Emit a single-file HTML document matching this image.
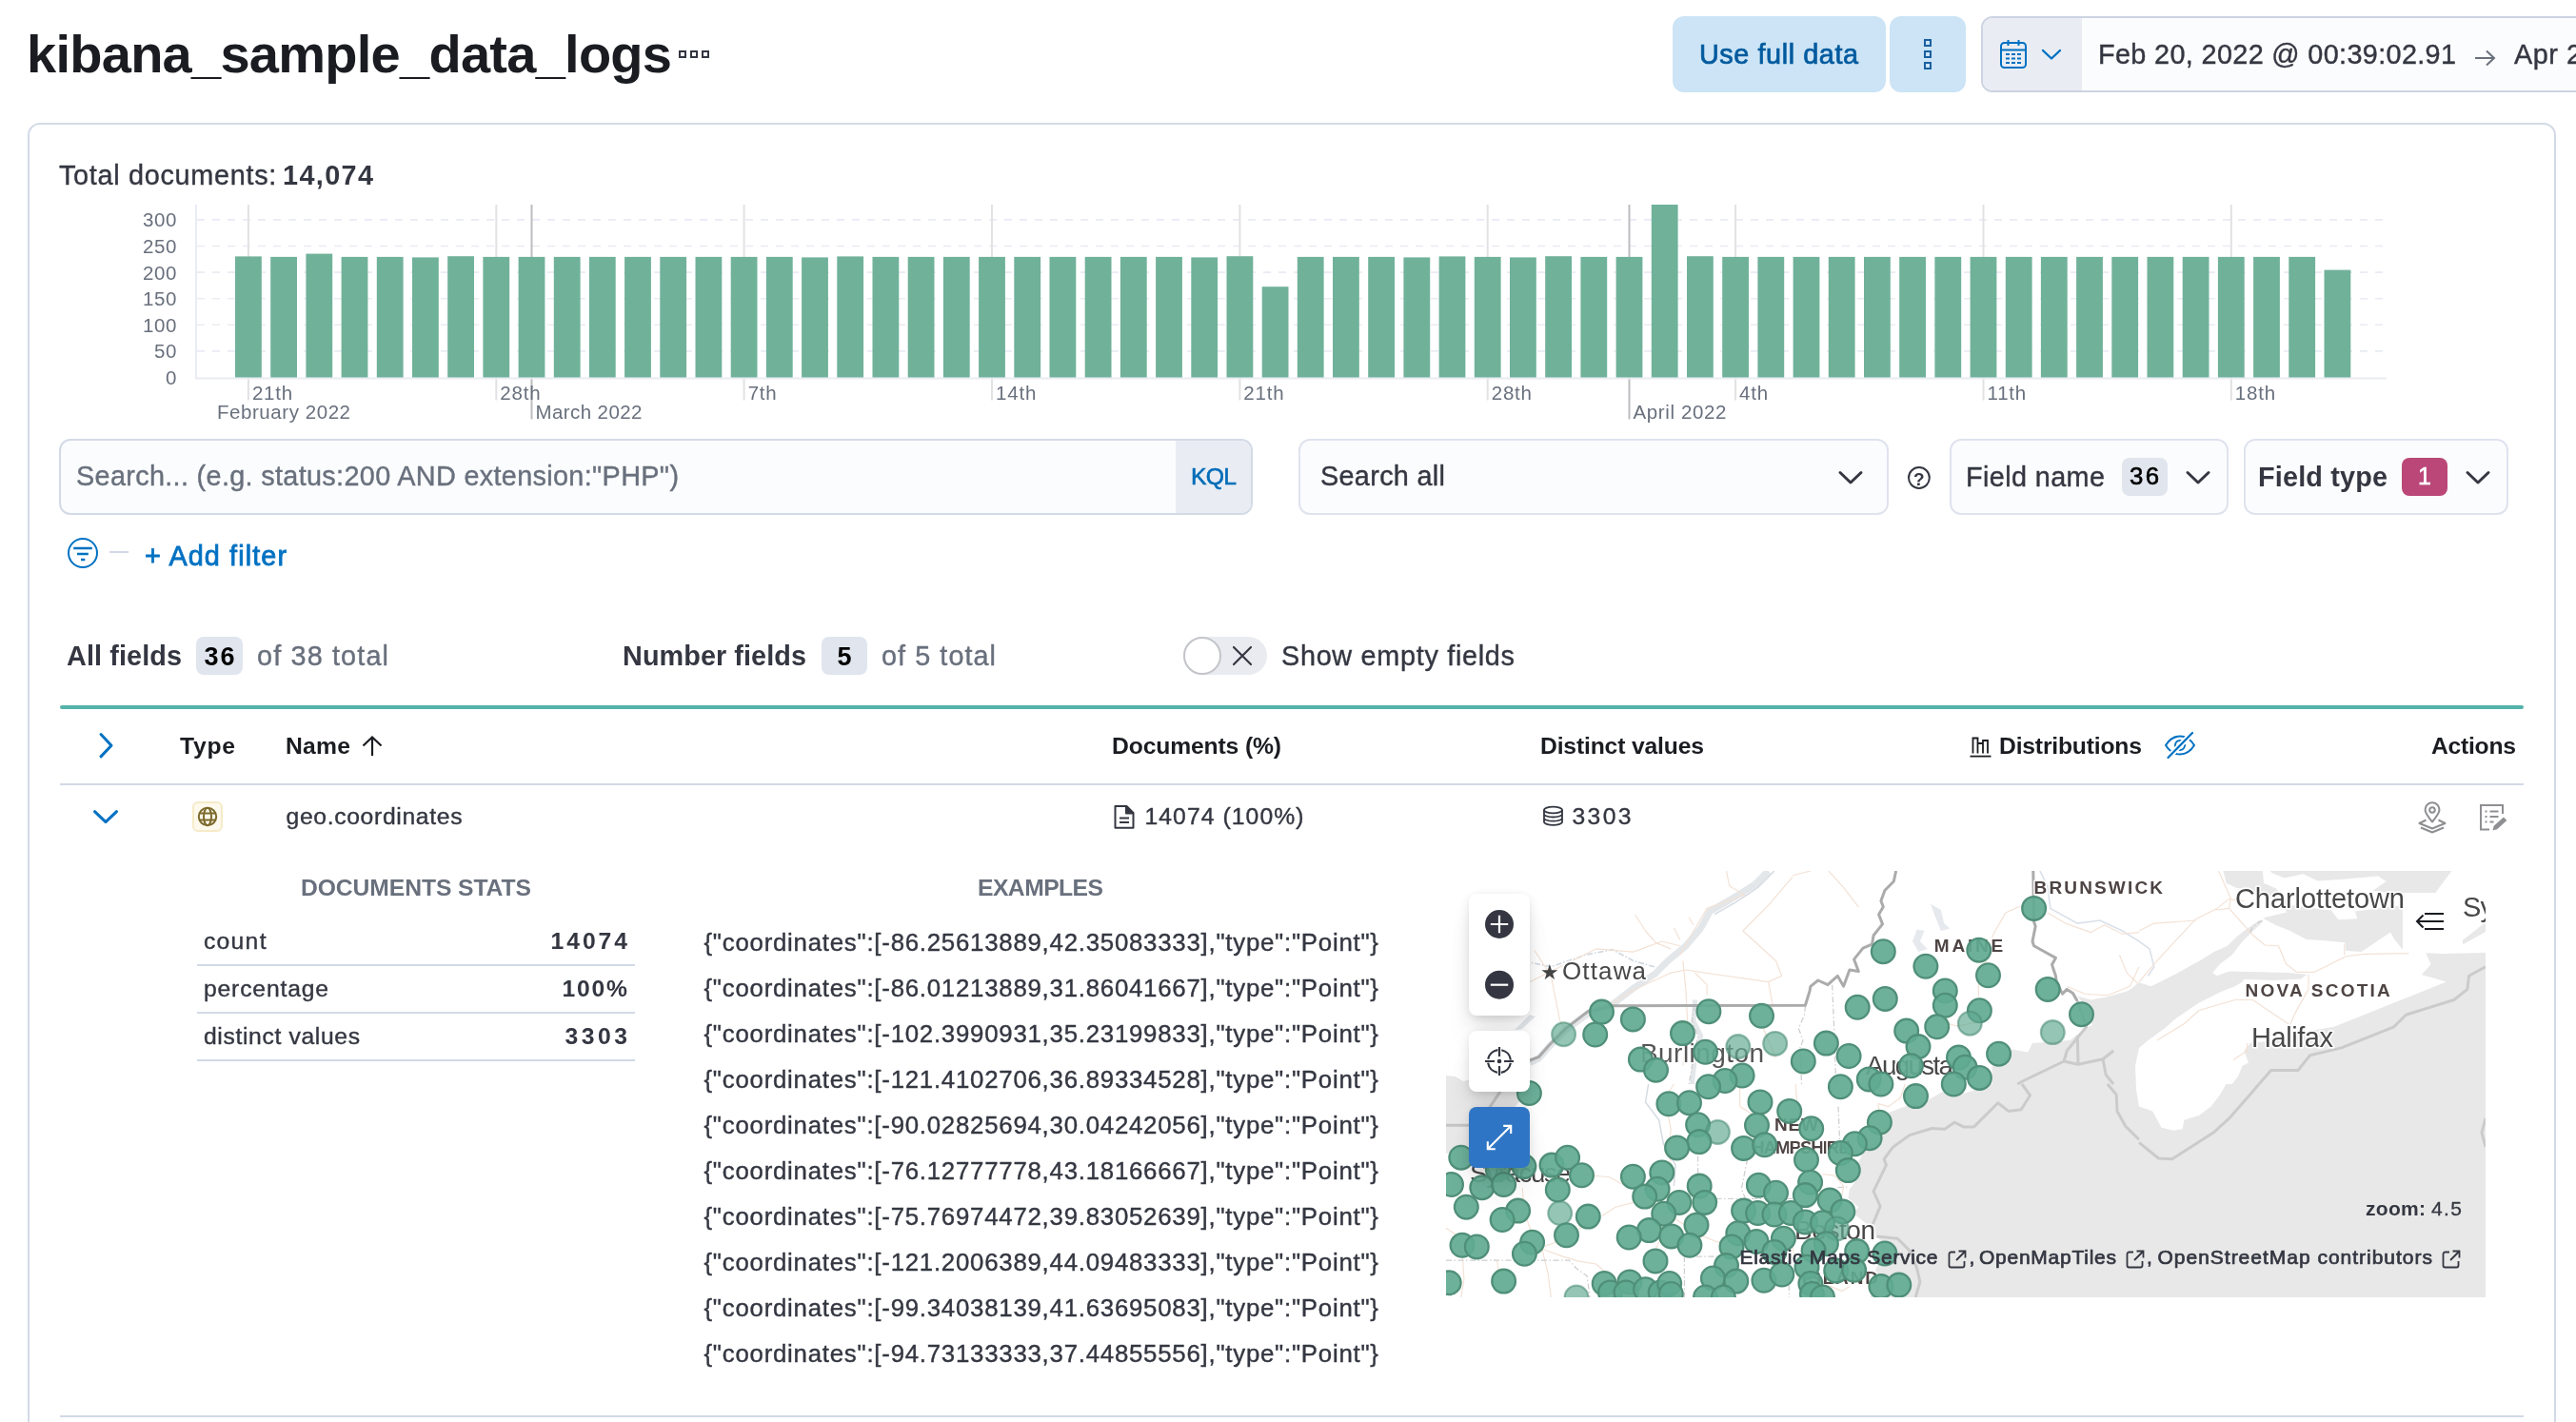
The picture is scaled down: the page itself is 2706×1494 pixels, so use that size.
<!DOCTYPE html><html><head><meta charset="utf-8"><title>Data Visualizer</title><style>
html,body{margin:0;padding:0;background:#fff;}body{width:2706px;height:1494px;position:relative;overflow:hidden;font-family:"Liberation Sans", sans-serif;}
.a{position:absolute;box-sizing:border-box;display:block}.t{position:absolute;white-space:pre;margin:0;padding:0}
</style></head><body><div id="root" style="position:absolute;left:0;top:0;width:2706px;height:1494px;overflow:hidden;will-change:transform;background:#fff">
<div class="a" style="left:713px;top:53px;width:8px;height:8px;background:transparent;border:2px solid #343741;"></div>
<div class="a" style="left:725px;top:53px;width:8px;height:8px;background:transparent;border:2px solid #343741;"></div>
<div class="a" style="left:737px;top:53px;width:8px;height:8px;background:transparent;border:2px solid #343741;"></div>
<div class="a" style="left:1757px;top:17px;width:224px;height:80px;background:#cce4f5;border-radius:12px;"></div>
<div class="a" style="left:1985px;top:17px;width:80px;height:80px;background:#cce4f5;border-radius:12px;"></div>
<div class="a" style="left:2021px;top:41px;width:8px;height:8px;background:transparent;border:2px solid #1a5fa0;"></div>
<div class="a" style="left:2021px;top:53px;width:8px;height:8px;background:transparent;border:2px solid #1a5fa0;"></div>
<div class="a" style="left:2021px;top:65px;width:8px;height:8px;background:transparent;border:2px solid #1a5fa0;"></div>
<div class="a" style="left:2081px;top:17px;width:700px;height:80px;background:#fbfcfd;border:2px solid #cdd3e2;border-radius:12px;"></div>
<div class="a" style="left:2083px;top:19px;width:104px;height:76px;background:#e9edf3;border-radius:10px 0 0 10px;"></div>
<svg class="a" style="left:2099px;top:40px;" width="32" height="34" viewBox="0 0 32 34"><g fill="none" stroke="#0071c2" stroke-width="2">
<rect x="3" y="5" width="26" height="26" rx="3.5"/>
<path d="M3 12.5h26M10.5 2v6M21.5 2v6"/>
<path d="M8 17h4M14 17h4M20 17h4M8 21.5h4M14 21.5h4M20 21.5h4M8 26h4M14 26h4M20 26h4" stroke-width="2.2"/></g></svg>
<svg class="a" style="left:2143px;top:49px;" width="24" height="16" viewBox="0 0 24 16"><path d="M3 4l9 8.5 9-8.5" fill="none" stroke="#0071c2" stroke-width="2.4" stroke-linecap="round" stroke-linejoin="round"/></svg>
<svg class="a" style="left:2598px;top:50px;" width="26" height="22" viewBox="0 0 26 22"><path d="M2 11h20M14 3.5l8 7.5-8 7.5" fill="none" stroke="#69707d" stroke-width="2"/></svg>
<div class="a" style="left:29px;top:129px;width:2656px;height:1500px;background:#fff;border:2px solid #d3dae6;border-radius:13px;"></div>
<svg class="a" style="left:60px;top:205px;" width="2600" height="245" viewBox="60 205 2600 245"><path d="M207 368.9H2503" stroke="#e9ecf3" stroke-width="1.6" stroke-dasharray="8 8"/><path d="M207 341.3H2503" stroke="#e9ecf3" stroke-width="1.6" stroke-dasharray="8 8"/><path d="M207 313.7H2503" stroke="#e9ecf3" stroke-width="1.6" stroke-dasharray="8 8"/><path d="M207 286.1H2503" stroke="#e9ecf3" stroke-width="1.6" stroke-dasharray="8 8"/><path d="M207 258.5H2503" stroke="#e9ecf3" stroke-width="1.6" stroke-dasharray="8 8"/><path d="M207 230.9H2503" stroke="#e9ecf3" stroke-width="1.6" stroke-dasharray="8 8"/><path d="M260.9 215V420.5" stroke="#e2e2e4" stroke-width="2"/><path d="M521.3 215V420.5" stroke="#e2e2e4" stroke-width="2"/><path d="M781.6 215V420.5" stroke="#e2e2e4" stroke-width="2"/><path d="M1042.0 215V420.5" stroke="#e2e2e4" stroke-width="2"/><path d="M1302.4 215V420.5" stroke="#e2e2e4" stroke-width="2"/><path d="M1562.7 215V420.5" stroke="#e2e2e4" stroke-width="2"/><path d="M1823.1 215V420.5" stroke="#e2e2e4" stroke-width="2"/><path d="M2083.5 215V420.5" stroke="#e2e2e4" stroke-width="2"/><path d="M2343.8 215V420.5" stroke="#e2e2e4" stroke-width="2"/><path d="M558.5 215V440.5" stroke="#bdbdc0" stroke-width="2"/><path d="M1711.5 215V440.5" stroke="#bdbdc0" stroke-width="2"/><path d="M206 215V397.5H2507" fill="none" stroke="#e9ecf3" stroke-width="2"/><rect x="247.0" y="269.4" width="27.8" height="127.1" fill="#70b19a"/><rect x="284.2" y="269.9" width="27.8" height="126.6" fill="#70b19a"/><rect x="321.4" y="266.6" width="27.8" height="129.9" fill="#70b19a"/><rect x="358.6" y="269.9" width="27.8" height="126.6" fill="#70b19a"/><rect x="395.8" y="269.9" width="27.8" height="126.6" fill="#70b19a"/><rect x="433.0" y="270.4" width="27.8" height="126.1" fill="#70b19a"/><rect x="470.2" y="269.2" width="27.8" height="127.3" fill="#70b19a"/><rect x="507.4" y="269.9" width="27.8" height="126.6" fill="#70b19a"/><rect x="544.6" y="269.9" width="27.8" height="126.6" fill="#70b19a"/><rect x="581.8" y="269.9" width="27.8" height="126.6" fill="#70b19a"/><rect x="618.9" y="269.9" width="27.8" height="126.6" fill="#70b19a"/><rect x="656.1" y="269.9" width="27.8" height="126.6" fill="#70b19a"/><rect x="693.3" y="269.9" width="27.8" height="126.6" fill="#70b19a"/><rect x="730.5" y="269.9" width="27.8" height="126.6" fill="#70b19a"/><rect x="767.7" y="269.9" width="27.8" height="126.6" fill="#70b19a"/><rect x="804.9" y="269.9" width="27.8" height="126.6" fill="#70b19a"/><rect x="842.1" y="270.4" width="27.8" height="126.1" fill="#70b19a"/><rect x="879.3" y="269.4" width="27.8" height="127.1" fill="#70b19a"/><rect x="916.5" y="269.9" width="27.8" height="126.6" fill="#70b19a"/><rect x="953.7" y="269.9" width="27.8" height="126.6" fill="#70b19a"/><rect x="990.9" y="269.9" width="27.8" height="126.6" fill="#70b19a"/><rect x="1028.1" y="269.9" width="27.8" height="126.6" fill="#70b19a"/><rect x="1065.3" y="269.9" width="27.8" height="126.6" fill="#70b19a"/><rect x="1102.5" y="269.9" width="27.8" height="126.6" fill="#70b19a"/><rect x="1139.7" y="269.9" width="27.8" height="126.6" fill="#70b19a"/><rect x="1176.9" y="269.9" width="27.8" height="126.6" fill="#70b19a"/><rect x="1214.1" y="269.9" width="27.8" height="126.6" fill="#70b19a"/><rect x="1251.3" y="270.4" width="27.8" height="126.1" fill="#70b19a"/><rect x="1288.5" y="269.2" width="27.8" height="127.3" fill="#70b19a"/><rect x="1325.7" y="301.2" width="27.8" height="95.3" fill="#70b19a"/><rect x="1362.8" y="269.9" width="27.8" height="126.6" fill="#70b19a"/><rect x="1400.0" y="269.9" width="27.8" height="126.6" fill="#70b19a"/><rect x="1437.2" y="269.9" width="27.8" height="126.6" fill="#70b19a"/><rect x="1474.4" y="270.4" width="27.8" height="126.1" fill="#70b19a"/><rect x="1511.6" y="269.4" width="27.8" height="127.1" fill="#70b19a"/><rect x="1548.8" y="269.9" width="27.8" height="126.6" fill="#70b19a"/><rect x="1586.0" y="270.4" width="27.8" height="126.1" fill="#70b19a"/><rect x="1623.2" y="269.2" width="27.8" height="127.3" fill="#70b19a"/><rect x="1660.4" y="269.9" width="27.8" height="126.6" fill="#70b19a"/><rect x="1697.6" y="269.9" width="27.8" height="126.6" fill="#70b19a"/><rect x="1734.8" y="215.0" width="27.8" height="181.5" fill="#70b19a"/><rect x="1772.0" y="269.2" width="27.8" height="127.3" fill="#70b19a"/><rect x="1809.2" y="269.9" width="27.8" height="126.6" fill="#70b19a"/><rect x="1846.4" y="269.9" width="27.8" height="126.6" fill="#70b19a"/><rect x="1883.6" y="269.9" width="27.8" height="126.6" fill="#70b19a"/><rect x="1920.8" y="269.9" width="27.8" height="126.6" fill="#70b19a"/><rect x="1958.0" y="269.9" width="27.8" height="126.6" fill="#70b19a"/><rect x="1995.2" y="269.9" width="27.8" height="126.6" fill="#70b19a"/><rect x="2032.4" y="269.9" width="27.8" height="126.6" fill="#70b19a"/><rect x="2069.6" y="269.9" width="27.8" height="126.6" fill="#70b19a"/><rect x="2106.8" y="269.9" width="27.8" height="126.6" fill="#70b19a"/><rect x="2143.9" y="269.9" width="27.8" height="126.6" fill="#70b19a"/><rect x="2181.1" y="269.9" width="27.8" height="126.6" fill="#70b19a"/><rect x="2218.3" y="269.9" width="27.8" height="126.6" fill="#70b19a"/><rect x="2255.5" y="269.9" width="27.8" height="126.6" fill="#70b19a"/><rect x="2292.7" y="269.9" width="27.8" height="126.6" fill="#70b19a"/><rect x="2329.9" y="269.9" width="27.8" height="126.6" fill="#70b19a"/><rect x="2367.1" y="269.9" width="27.8" height="126.6" fill="#70b19a"/><rect x="2404.3" y="269.9" width="27.8" height="126.6" fill="#70b19a"/><rect x="2441.5" y="283.6" width="27.8" height="112.9" fill="#70b19a"/></svg>
<div class="a" style="left:62px;top:461px;width:1254px;height:80px;background:#fbfcfd;border:2px solid #d3dae6;border-radius:12px;"></div>
<div class="a" style="left:1235px;top:463px;width:79px;height:76px;background:#e9edf3;border-radius:0 10px 10px 0;"></div>
<div class="a" style="left:1364px;top:461px;width:620px;height:80px;background:#fbfcfd;border:2px solid #dfe3ee;border-radius:12px;"></div>
<svg class="a" style="left:1929px;top:492px;" width="30" height="19" viewBox="0 0 30 19"><path d="M4 4.5l11.0 10.5 11.0 -10.5" fill="none" stroke="#343741" stroke-width="3" stroke-linecap="round" stroke-linejoin="round"/></svg>
<svg class="a" style="left:2002px;top:488px;" width="28" height="28" viewBox="0 0 28 28"><circle cx="13.9" cy="14" r="10.9" fill="none" stroke="#343741" stroke-width="2"/></svg>
<div class="a" style="left:2048px;top:461px;width:293px;height:80px;background:#fbfcfd;border:2px solid #dfe3ee;border-radius:12px;"></div>
<div class="a" style="left:2229px;top:481px;width:48px;height:40px;background:#e0e5ee;border-radius:8px;"></div>
<svg class="a" style="left:2294px;top:492px;" width="30" height="19" viewBox="0 0 30 19"><path d="M4 4.5l11.0 10.5 11.0 -10.5" fill="none" stroke="#343741" stroke-width="3" stroke-linecap="round" stroke-linejoin="round"/></svg>
<div class="a" style="left:2357px;top:461px;width:278px;height:80px;background:#fbfcfd;border:2px solid #dfe3ee;border-radius:12px;"></div>
<div class="a" style="left:2523px;top:481px;width:48px;height:40px;background:#ba4778;border-radius:8px;"></div>
<svg class="a" style="left:2588px;top:492px;" width="30" height="19" viewBox="0 0 30 19"><path d="M4 4.5l11.0 10.5 11.0 -10.5" fill="none" stroke="#343741" stroke-width="3" stroke-linecap="round" stroke-linejoin="round"/></svg>
<svg class="a" style="left:69px;top:563px;" width="36" height="36" viewBox="0 0 36 36"><g fill="none" stroke="#0071c2" stroke-width="2"><circle cx="18" cy="18" r="15"/>
<path d="M8.2 13h19.6M12 19h11.8M16 25h4.3" stroke-width="2.4"/></g></svg>
<div class="a" style="left:115px;top:579px;width:20px;height:2px;background:#d3d7e6;"></div>
<div class="a" style="left:206px;top:669px;width:49px;height:40px;background:#e0e5ee;border-radius:8px;"></div>
<div class="a" style="left:863px;top:669px;width:48px;height:40px;background:#e0e5ee;border-radius:8px;"></div>
<div class="a" style="left:1243px;top:669px;width:88px;height:40px;background:#e9ebf0;border-radius:20px;"></div>
<div class="a" style="left:1243px;top:669px;width:40px;height:40px;background:#fff;border:2px solid #c3c5c9;border-radius:20px;"></div>
<svg class="a" style="left:1293px;top:677px;" width="24" height="24" viewBox="0 0 24 24"><path d="M3 3l18 18M21 3L3 21" stroke="#343741" stroke-width="2.2" fill="none" stroke-linecap="round"/></svg>
<div class="a" style="left:63px;top:741px;width:2588px;height:4px;background:#54b3ab;border-radius:2px;"></div>
<div class="a" style="left:63px;top:823px;width:2588px;height:2px;background:#d3dae6;"></div>
<svg class="a" style="left:100px;top:766px;" width="24" height="34" viewBox="0 0 24 34"><path d="M6 5.5l11 11.7-11 11.7" fill="none" stroke="#0071c2" stroke-width="3" stroke-linecap="round" stroke-linejoin="round"/></svg>
<svg class="a" style="left:378px;top:771px;" width="26" height="26" viewBox="0 0 26 26"><path d="M13 23V4M3.5 12.5L13 3.5l9.5 9" fill="none" stroke="#1a1c21" stroke-width="2.2" stroke-linejoin="miter"/></svg>
<svg class="a" style="left:2068px;top:772px;" width="26" height="26" viewBox="0 0 26 26"><g fill="none" stroke="#1a1c21" stroke-width="1.8"><path d="M1.5 22.6h22"/>
<path d="M4.5 19.5V3.5h5v16M9.5 19.5V9h5.5v10.5M15 19.5V6h5v13.5"/></g></svg>
<svg class="a" style="left:2272px;top:766px;" width="36" height="34" viewBox="0 0 36 34"><g fill="none" stroke="#0071c2" stroke-width="2" stroke-linecap="round">
<path d="M3 17c4-6.5 9-9.5 15-9.5s11 3 15 9.5c-4 6.500-9 9.500-15 9.500S7 23.500 3 17z" stroke-linejoin="round"/>
<circle cx="18" cy="17" r="5"/><path d="M5.500 30L31 4" stroke="#fff" stroke-width="6"/><path d="M5.500 30L31 4" stroke-width="2.2"/></g></svg>
<svg class="a" style="left:96px;top:848px;" width="30" height="20" viewBox="0 0 30 20"><path d="M3.5 4.7l11.5 11 11.500-11" fill="none" stroke="#0071c2" stroke-width="3" stroke-linecap="round" stroke-linejoin="round"/></svg>
<div class="a" style="left:202px;top:842px;width:32px;height:32px;background:#fdf9ec;border:2px solid #f5ebc8;border-radius:6px;"></div>
<svg class="a" style="left:206px;top:846px;" width="24" height="24" viewBox="0 0 24 24"><g fill="none" stroke="#7d6b2e" stroke-width="2"><circle cx="12" cy="12" r="9.200"/>
<ellipse cx="12" cy="12" rx="4" ry="9.200"/><path d="M3.500 8.500h17M3.500 15.500h17"/></g></svg>
<svg class="a" style="left:1168px;top:844px;" width="26" height="28" viewBox="0 0 26 28"><g fill="none" stroke="#343741" stroke-width="2" stroke-linejoin="round"><path d="M3.500 3h12l7 7v15.700h-19z"/>
<path d="M15 3v7.500h7.500" fill="#343741"/><path d="M8 15.500h10M8 20h10" stroke-width="1.800"/></g></svg>
<svg class="a" style="left:1619px;top:845px;" width="26" height="24" viewBox="0 0 26 24"><g fill="none" stroke="#343741" stroke-width="1.800"><ellipse cx="12.500" cy="6" rx="9.500" ry="3.300"/>
<path d="M3 6v12.500c0 1.800 4.200 3.300 9.500 3.300s9.500-1.500 9.500-3.300V6M3 10.200c0 1.800 4.200 3.300 9.500 3.300s9.500-1.500 9.500-3.300M3 14.400c0 1.800 4.200 3.300 9.500 3.300s9.500-1.500 9.500-3.300"/></g></svg>
<svg class="a" style="left:2538px;top:841px;" width="34" height="36" viewBox="0 0 34 36"><g fill="none" stroke="#8e8f92" stroke-width="2" stroke-linejoin="round"><path d="M17 22.500c-5-6-7.500-9.500-7.500-12.700a7.500 7.500 0 0115 0c0 3.200-2.500 6.700-7.500 12.700z"/>
<circle cx="17" cy="10" r="2.800"/><path d="M10.500 20.500L3.500 24 17 29.500 30.500 24l-7-3.500M5 28.500l12 5 12-5"/></g></svg>
<svg class="a" style="left:2603px;top:843px;" width="32" height="32" viewBox="0 0 32 32"><g fill="none" stroke="#8e8f92" stroke-width="2"><path d="M26 12V3H3v25.500h9"/>
<path d="M7.500 9.500h2M12.500 9.500h9M7.500 15h2M12.500 15h9M7.500 20.500h2M12.500 20.500h4" stroke-width="2"/>
<path d="M15.500 29.500l1.200-4.700L27 15.500l3.300 3.400-10.200 9.400z" fill="#8e8f92" stroke="none"/></g></svg>
<div class="a" style="left:207px;top:1013px;width:460px;height:2px;background:#d3dae6;"></div>
<div class="a" style="left:207px;top:1062.7px;width:460px;height:2px;background:#d3dae6;"></div>
<div class="a" style="left:207px;top:1112.5px;width:460px;height:2px;background:#d3dae6;"></div>
<div class="a" style="left:63px;top:1487px;width:2588px;height:2px;background:#d3dae6;"></div>
<svg class="a" style="left:1519px;top:915px;overflow:hidden;" width="1092" height="448" viewBox="0 0 1092 448"><rect x="0" y="0" width="1092" height="448" fill="#e8e8e8"/><path d="M0.0 0.0L816.5 0.0L819.7 13.1L830.6 18.0L843.7 19.1L865.5 28.4L880.8 36.0L883.0 43.6L857.9 49.6L871.0 56.7L887.4 63.3L903.7 72.0L920.1 73.1L944.1 75.3L945.2 84.0L961.5 85.1L992.1 64.4L996.4 72.0L1004.1 81.8L1067.0 78.0L1092.0 64.0L1092.0 86.0L1046.0 87.0L1029.2 86.2L1034.6 98.2L1024.8 109.1L1050.9 116.6L1027.3 126.0L995.8 138.6L964.3 151.2L932.8 163.8L913.9 167.0L885.5 176.4L844.6 181.1L838.3 189.0L843.0 201.6L836.7 204.8L832.0 215.8L825.7 224.0L819.4 224.0L813.1 235.0L803.6 247.6L791.0 257.1L775.3 261.8L773.7 271.3L764.2 272.8L751.6 269.7L742.2 252.4L728.0 247.6L725.0 230.0L724.0 205.0L728.0 186.0L737.5 178.0L754.8 165.4L767.4 154.4L791.0 138.6L816.2 126.0L828.8 121.3L836.7 116.6L838.3 113.7L869.8 115.0L898.1 113.4L904.4 108.7L885.5 107.1L854.0 106.3L822.5 105.5L809.9 110.3L805.2 107.1L813.1 97.7L825.7 88.2L836.7 74.0L844.6 66.2L858.7 52.8L854.0 52.0L845.3 58.3L838.3 63.0L830.4 69.3L820.9 78.8L806.8 85.1L794.2 92.9L780.0 100.8L765.8 108.7L740.6 121.3L728.0 117.3L716.8 126.0L694.8 132.3L677.4 135.5L663.3 131.5L668.8 138.6L679.0 162.2L672.7 164.6L655.4 178.0L616.0 181.1L611.3 190.6L594.0 187.4L581.4 203.2L573.5 204.8L573.5 224.0L545.1 233.5L521.5 231.9L505.8 241.3L482.1 247.6L464.8 253.9L461.7 276.0L439.6 293.3L433.3 305.9L434.9 320.1L423.9 334.3L422.3 343.7L433.3 353.2L427.0 359.5L445.9 373.6L452.2 383.1L458.5 391.0L456.0 410.0L448.0 425.0L446.0 436.0L446.0 448.0L0.0 448.0Z" fill="#fff"/><path d="M857.9 0.0L859.0 13.1L872.1 18.5L887.4 36.0L929.9 41.5L937.5 51.3L957.2 50.2L955.0 42.5L1005.2 36.0L1005.2 25.1L973.5 20.7L987.7 10.9L979.0 5.5L941.9 8.7L915.7 10.4L900.5 3.3L880.8 7.6L867.7 2.2L865.5 0.0Z" fill="#fff"/><path d="M1056.4 0.0L1092.0 0.0L1092.0 54.0L1069.0 72.0L1040.0 72.0L1040.0 22.0Z" fill="#fff"/><path d="M0.0 215.0L10.0 216.0L18.0 221.0L30.0 218.0L50.0 213.0L70.0 208.0L84.0 204.0L87.0 215.0L86.0 232.0L74.0 246.0L60.0 262.0L40.0 280.0L20.0 291.0L0.0 297.0Z" fill="#e8e8e8"/><path d="M88.0 151.0L94.0 153.0L80.0 166.0L72.0 167.0Z" fill="#e3e6ea"/><path d="M338.6 0.0L324.5 14.2L299.3 29.9L277.2 42.5L267.8 59.9L252.0 78.8L233.1 94.5L218.9 108.7L195.3 124.4L174.8 140.2L149.6 149.6L126.0 167.0L108.7 184.3L97.7 196.9L88.2 201.6" fill="none" stroke="#e4e7ea" stroke-width="7" stroke-linejoin="round"/><path d="M344.9 0.0L327.6 17.3L304.0 33.1L281.9 45.7" fill="none" stroke="#d5dbe3" stroke-width="1.5"/><path d="M218.9 100.8L196.9 94.5L174.8 82.7L146.5 88.2L110.3 100.8L88.2 96.1" fill="none" stroke="#cfd6de" stroke-width="1.6" stroke-dasharray="6 2 1.5 2"/><path d="M261.5 135.5L259.9 157.5L267.8 173.3L261.5 196.9L258.3 224.0" fill="none" stroke="#e4e7ea" stroke-width="5"/><path d="M212.6 224.0L209.5 243.0L223.7 261.8L228.4 287.0L241.0 309.0L239.4 331.0" fill="none" stroke="#d5dbe3" stroke-width="1.5"/><path d="M508.9 34.7L519.9 41.0L523.1 55.1L529.4 60.6L519.9 63.0L513.6 47.3Z" fill="#e6e9ed"/><path d="M494.7 61.4L502.6 63.0L497.9 74.0L505.8 81.9L496.3 85.1L490.0 74.0Z" fill="#e6e9ed"/><path d="M623.9 0.0L631.8 15.8L634.9 39.4L663.3 55.1L686.9 52.0L710.5 63.0L728.0 74.0" fill="none" stroke="#dbe1ea" stroke-width="1.6"/><path d="M728.0 74.0L739.0 81.9L743.8 100.8L737.5 110.3" fill="none" stroke="#dbe1ea" stroke-width="1.6"/><path d="M92.9 83.5L110.3 110.3L119.7 157.5L126.0 167.0" fill="none" stroke="#f3e1d4" stroke-width="1.15" stroke-linejoin="round"/><path d="M88.2 116.6L126.0 97.7L157.5 81.9L196.9 85.1L226.8 74.0L245.7 78.8" fill="none" stroke="#f3e1d4" stroke-width="1.15" stroke-linejoin="round"/><path d="M198.5 45.7L209.5 63.0L220.5 75.6L236.3 81.9" fill="none" stroke="#f3e1d4" stroke-width="1.15" stroke-linejoin="round"/><path d="M294.5 0.0L297.7 15.8L313.4 25.2L274.1 39.4L258.3 66.2L245.7 88.2" fill="none" stroke="#f3e1d4" stroke-width="1.15" stroke-linejoin="round"/><path d="M364.0 6.3L338.6 36.2L311.9 63.0L346.5 94.5L352.8 110.3L338.6 116.6L283.5 108.7L252.0 104.0" fill="none" stroke="#f3e1d4" stroke-width="1.15" stroke-linejoin="round"/><path d="M248.9 94.5L252.0 126.0L253.6 157.5L248.9 204.8" fill="none" stroke="#f3e1d4" stroke-width="1.15" stroke-linejoin="round"/><path d="M261.5 107.1L274.1 119.7L274.1 130.7" fill="none" stroke="#f3e1d4" stroke-width="1.15" stroke-linejoin="round"/><path d="M338.6 116.6L343.4 141.8L333.9 167.0L346.5 196.9" fill="none" stroke="#f3e1d4" stroke-width="1.15" stroke-linejoin="round"/><path d="M255.2 48.8L259.9 56.7" fill="none" stroke="#f3e1d4" stroke-width="1.15" stroke-linejoin="round"/><path d="M239.4 59.9L245.7 72.5" fill="none" stroke="#f3e1d4" stroke-width="1.15" stroke-linejoin="round"/><path d="M173.3 140.2L195.3 126.0L236.3 107.1L252.0 104.0" fill="none" stroke="#f3e1d4" stroke-width="1.15" stroke-linejoin="round"/><path d="M364.0 4.7L382.9 0.0" fill="none" stroke="#f3e1d4" stroke-width="1.15" stroke-linejoin="round"/><path d="M401.8 0.0L417.6 17.3L433.3 37.8" fill="none" stroke="#f3e1d4" stroke-width="1.15" stroke-linejoin="round"/><path d="M559.3 132.3L559.3 119.7L575.1 66.2L587.7 44.1L603.4 37.0" fill="none" stroke="#f3e1d4" stroke-width="1.15" stroke-linejoin="round"/><path d="M527.8 160.7L537.3 163.0L557.7 159.1" fill="none" stroke="#f3e1d4" stroke-width="1.15" stroke-linejoin="round"/><path d="M631.8 44.1L650.7 55.1L677.4 64.6L691.6 56.7L710.5 66.2L728.0 64.6" fill="none" stroke="#f3e1d4" stroke-width="1.15" stroke-linejoin="round"/><path d="M652.2 121.3L671.1 129.2L694.8 130.7L718.4 121.3L728.0 100.8" fill="none" stroke="#f3e1d4" stroke-width="1.15" stroke-linejoin="round"/><path d="M707.4 88.2L715.2 107.1L728.0 119.7" fill="none" stroke="#f3e1d4" stroke-width="1.15" stroke-linejoin="round"/><path d="M811.5 0.0L824.1 28.4L809.9 39.4L787.9 50.4L764.2 75.6L746.9 94.5L728.0 116.6" fill="none" stroke="#f3e1d4" stroke-width="1.15" stroke-linejoin="round"/><path d="M728.0 63.0L743.8 55.1L787.9 52.0" fill="none" stroke="#f3e1d4" stroke-width="1.15" stroke-linejoin="round"/><path d="M822.5 39.4L847.7 67.7L860.3 78.0L874.5 78.8L882.4 97.7L893.4 106.3L912.3 106.3L945.4 89.8L964.3 87.4L1011.5 86.6" fill="none" stroke="#f3e1d4" stroke-width="1.15" stroke-linejoin="round"/><path d="M906.0 108.7L906.0 124.4L891.8 149.6L887.1 160.7" fill="none" stroke="#f3e1d4" stroke-width="1.15" stroke-linejoin="round"/><path d="M887.1 162.2L858.7 143.3L847.7 135.5L828.8 135.5L791.0 146.5L775.3 160.7L746.9 178.0" fill="none" stroke="#f3e1d4" stroke-width="1.15" stroke-linejoin="round"/><path d="M841.4 181.1L841.4 189.0L827.2 198.5" fill="none" stroke="#f3e1d4" stroke-width="1.15" stroke-linejoin="round"/><path d="M943.8 77.2L943.8 88.2" fill="none" stroke="#f3e1d4" stroke-width="1.15" stroke-linejoin="round"/><path d="M808.3 41.0L822.5 39.4L824.1 29.9L838.3 31.5" fill="none" stroke="#f3e1d4" stroke-width="1.15" stroke-linejoin="round"/><path d="M138.6 318.5L171.7 321.7L185.9 329.5" fill="none" stroke="#f3e1d4" stroke-width="1.15" stroke-linejoin="round"/><path d="M163.8 362.6L178.0 353.2L196.9 348.4" fill="none" stroke="#f3e1d4" stroke-width="1.15" stroke-linejoin="round"/><path d="M138.6 376.8L162.2 362.6" fill="none" stroke="#f3e1d4" stroke-width="1.15" stroke-linejoin="round"/><path d="M80.3 332.7L81.9 357.9L88.2 375.2L100.8 397.3L107.1 422.5L110.3 448.0" fill="none" stroke="#f3e1d4" stroke-width="1.15" stroke-linejoin="round"/><path d="M100.8 397.3L122.9 405.1L138.6 409.9L157.5 413.0L167.0 420.9" fill="none" stroke="#f3e1d4" stroke-width="1.15" stroke-linejoin="round"/><path d="M0.0 375.2L9.5 381.5L17.3 405.1L18.9 428.8L15.8 448.0" fill="none" stroke="#f3e1d4" stroke-width="1.15" stroke-linejoin="round"/><path d="M231.5 249.2L236.3 271.3L233.1 296.5L236.3 305.9" fill="none" stroke="#f3e1d4" stroke-width="1.15" stroke-linejoin="round"/><path d="M241.0 365.8L267.8 383.1L288.2 391.0" fill="none" stroke="#f3e1d4" stroke-width="1.15" stroke-linejoin="round"/><path d="M223.7 389.4L220.5 397.3" fill="none" stroke="#f3e1d4" stroke-width="1.15" stroke-linejoin="round"/><path d="M308.7 224.0L308.7 247.6L321.3 255.5" fill="none" stroke="#f3e1d4" stroke-width="1.15" stroke-linejoin="round"/><path d="M239.4 224.0L233.1 233.5" fill="none" stroke="#f3e1d4" stroke-width="1.15" stroke-linejoin="round"/><path d="M104.0 394.1L113.4 391.0L122.9 381.5" fill="none" stroke="#f3e1d4" stroke-width="1.15" stroke-linejoin="round"/><path d="M53.6 409.9L55.1 419.3" fill="none" stroke="#f3e1d4" stroke-width="1.15" stroke-linejoin="round"/><path d="M367.2 224.0L368.7 242.9" fill="none" stroke="#f3e1d4" stroke-width="1.15" stroke-linejoin="round"/><path d="M482.1 224.0L477.4 238.2L464.8 247.6L453.8 244.5L455.4 255.5" fill="none" stroke="#f3e1d4" stroke-width="1.15" stroke-linejoin="round"/><path d="M395.5 318.5L408.1 320.1L417.6 331.1L416.0 340.6" fill="none" stroke="#f3e1d4" stroke-width="1.15" stroke-linejoin="round"/><path d="M364.0 394.1L367.2 413.0L373.5 448.0" fill="none" stroke="#f3e1d4" stroke-width="1.15" stroke-linejoin="round"/><path d="M400.2 435.1L416.0 441.4L423.9 436.6" fill="none" stroke="#f3e1d4" stroke-width="1.15" stroke-linejoin="round"/><path d="M405.7 119.7L407.3 157.5L409.7 224.0" fill="none" stroke="#cdcdd0" stroke-width="1.2" stroke-dasharray="6 2.5 1.5 2.5"/><path d="M377.4 141.8L376.6 151.2L370.3 165.4L375.0 178.0L371.9 185.9L373.5 224.0" fill="none" stroke="#cdcdd0" stroke-width="1.2" stroke-dasharray="6 2.5 1.5 2.5"/><path d="M261.5 141.8L258.3 157.5L264.6 173.3L259.9 196.9L255.2 224.0" fill="none" stroke="#cdcdd0" stroke-width="1.2" stroke-dasharray="6 2.5 1.5 2.5"/><path d="M0.0 409.1L129.2 409.1L137.0 417.7L148.1 425.6L151.2 448.0" fill="none" stroke="#cdcdd0" stroke-width="1.2" stroke-dasharray="6 2.5 1.5 2.5"/><path d="M264.6 299.6L264.6 343.7" fill="none" stroke="#cdcdd0" stroke-width="1.2" stroke-dasharray="6 2.5 1.5 2.5"/><path d="M283.5 344.5L364.0 344.5" fill="none" stroke="#cdcdd0" stroke-width="1.2" stroke-dasharray="6 2.5 1.5 2.5"/><path d="M250.4 405.1L250.4 448.0" fill="none" stroke="#cdcdd0" stroke-width="1.2" stroke-dasharray="6 2.5 1.5 2.5"/><path d="M250.4 405.1L288.2 405.1" fill="none" stroke="#cdcdd0" stroke-width="1.2" stroke-dasharray="6 2.5 1.5 2.5"/><path d="M316.6 302.8L310.3 334.3L315.0 345.3" fill="none" stroke="#cdcdd0" stroke-width="1.2" stroke-dasharray="6 2.5 1.5 2.5"/><path d="M412.0 247.6L413.6 283.9" fill="none" stroke="#cdcdd0" stroke-width="1.2" stroke-dasharray="6 2.5 1.5 2.5"/><path d="M411.3 332.7L422.3 331.9" fill="none" stroke="#cdcdd0" stroke-width="1.2" stroke-dasharray="6 2.5 1.5 2.5"/><path d="M359.1 409.9L360.7 448.0" fill="none" stroke="#cdcdd0" stroke-width="1.2" stroke-dasharray="6 2.5 1.5 2.5"/><path d="M857.2 52.0L847.7 58.3L844.6 64.6" fill="none" stroke="#cdcdd0" stroke-width="1.2" stroke-dasharray="6 2.5 1.5 2.5"/><path d="M88.0 199.0L97.7 195.3L108.7 182.7L126.0 165.4L149.6 147.3L175.6 141.7L377.4 141.3L382.1 126.0L382.9 121.3L390.8 115.0L401.0 119.7L411.3 110.3L417.6 121.3L423.9 104.0L433.3 105.5L428.6 92.9L438.0 81.1L447.5 77.2L449.1 67.7L458.5 55.9L454.6 45.7L459.3 37.8L456.9 31.5L460.9 20.5L470.3 11.0L472.7 0.0" fill="none" stroke="#ababab" stroke-width="3" stroke-linejoin="round"/><path d="M616.8 0.0L617.6 53.6L619.2 58.3L616.0 74.0L617.6 78.8L630.2 85.8L640.4 91.4L636.5 98.4L640.4 110.3L641.2 116.6L647.5 129.2L652.2 124.4L658.5 128.4L663.3 137.0" fill="none" stroke="#ababab" stroke-width="3" stroke-linejoin="round"/><path d="M88.0 199.0L70.0 215.0L57.0 231.7L45.9 248.4L24.0 267.2L0.0 267.2" fill="none" stroke="#c4c4c4" stroke-width="3"/><path d="M663.3 137.0L672.7 163.8L652.2 189.0L649.1 200.0L606.6 220.5L600.3 224.0" fill="none" stroke="#cbcbcb" stroke-width="3" stroke-linejoin="round"/><path d="M663.3 173.3L664.0 203.2L690.0 197.7L701.1 189.0" fill="none" stroke="#cbcbcb" stroke-width="3" stroke-linejoin="round"/><path d="M649.1 200.0L664.0 203.2" fill="none" stroke="#cbcbcb" stroke-width="3" stroke-linejoin="round"/><path d="M690.0 197.7L693.2 214.2L701.1 224.0" fill="none" stroke="#cbcbcb" stroke-width="3" stroke-linejoin="round"/><path d="M605.0 224.0L613.6 235.8L604.2 250.8L590.8 252.4L579.8 243.7L554.6 268.9L543.6 268.9L534.1 264.2L523.9 271.3L510.5 270.5L486.9 277.6L469.5 290.2L460.1 302.8L462.4 309.1L449.1 336.6L456.1 352.4L448.3 371.3" fill="none" stroke="#cbcbcb" stroke-width="3" stroke-linejoin="round"/><path d="M452.2 383.9L474.3 386.2L488.4 400.4L494.7 417.7L497.9 431.9L493.2 448.0" fill="none" stroke="#cbcbcb" stroke-width="3" stroke-linejoin="round"/><path d="M694.8 224.0L704.2 235.0L705.0 252.4L713.7 268.1L728.0 282.3" fill="none" stroke="#cbcbcb" stroke-width="3" stroke-linejoin="round"/><path d="M728.0 285.4L748.5 302.0L762.6 302.8L806.8 274.4L822.5 260.2L844.6 235.0L854.0 224.0" fill="none" stroke="#cbcbcb" stroke-width="3" stroke-linejoin="round"/><path d="M854.0 224.0L866.6 209.5L895.0 209.5L907.6 193.7L940.6 185.9L995.8 163.8L1008.4 151.2L1058.8 135.5L1072.9 124.4L1074.5 110.3L1092.0 100.8" fill="none" stroke="#cbcbcb" stroke-width="3" stroke-linejoin="round"/><path d="M1092.0 260.0L1088.0 275.0L1092.0 290.0" fill="none" stroke="#cbcbcb" stroke-width="3" stroke-linejoin="round"/><text x="99" y="114" font-family='"DejaVu Sans", sans-serif' font-size="22" fill="#444">★</text><text x="122" y="114.2" font-family='"Liberation Sans", sans-serif' font-size="26" font-weight="400" fill="#484848" letter-spacing="0" text-anchor="start" stroke="#fff" stroke-width="3.5" stroke-opacity=".85" paint-order="stroke" stroke-linejoin="round" textLength="88" lengthAdjust="spacing">Ottawa</text><text x="204" y="200.8" font-family='"Liberation Sans", sans-serif' font-size="28" font-weight="400" fill="#555" letter-spacing="0" text-anchor="start" stroke="#fff" stroke-width="3.5" stroke-opacity=".85" paint-order="stroke" stroke-linejoin="round" textLength="130" lengthAdjust="spacing">Burlington</text><text x="441" y="214.2" font-family='"Liberation Sans", sans-serif' font-size="28" font-weight="400" fill="#484848" letter-spacing="0" text-anchor="start" stroke="#fff" stroke-width="3.5" stroke-opacity=".85" paint-order="stroke" stroke-linejoin="round" textLength="92" lengthAdjust="spacing">Augusta</text><text x="829" y="38.7" font-family='"Liberation Sans", sans-serif' font-size="29" font-weight="400" fill="#484848" letter-spacing="0" text-anchor="start" stroke="#fff" stroke-width="3.5" stroke-opacity=".85" paint-order="stroke" stroke-linejoin="round" textLength="178" lengthAdjust="spacing">Charlottetown</text><text x="1068" y="48" font-family='"Liberation Sans", sans-serif' font-size="29" font-weight="400" fill="#484848" letter-spacing="0" text-anchor="start" stroke="#fff" stroke-width="3.5" stroke-opacity=".85" paint-order="stroke" stroke-linejoin="round" textLength="92" lengthAdjust="spacing">Sydney</text><text x="846" y="184.5" font-family='"Liberation Sans", sans-serif' font-size="29" font-weight="400" fill="#484848" letter-spacing="0" text-anchor="start" stroke="#fff" stroke-width="3.5" stroke-opacity=".85" paint-order="stroke" stroke-linejoin="round" textLength="86" lengthAdjust="spacing">Halifax</text><text x="366" y="387" font-family='"Liberation Sans", sans-serif' font-size="28" font-weight="400" fill="#484848" letter-spacing="0" text-anchor="start" stroke="#fff" stroke-width="3.5" stroke-opacity=".85" paint-order="stroke" stroke-linejoin="round" textLength="85" lengthAdjust="spacing">Boston</text><text x="25" y="327.2" font-family='"Liberation Sans", sans-serif' font-size="28" font-weight="400" fill="#484848" letter-spacing="0" text-anchor="start" stroke="#fff" stroke-width="3.5" stroke-opacity=".85" paint-order="stroke" stroke-linejoin="round" textLength="106" lengthAdjust="spacing">Syracuse</text><text x="512.8" y="85" font-family='"Liberation Sans", sans-serif' font-size="19" font-weight="700" fill="#4e4444" letter-spacing="0" text-anchor="start" stroke="#fff" stroke-width="3.5" stroke-opacity=".85" paint-order="stroke" stroke-linejoin="round" textLength="72.5" lengthAdjust="spacing">MAINE</text><text x="617.5" y="23.6" font-family='"Liberation Sans", sans-serif' font-size="19" font-weight="700" fill="#4e4444" letter-spacing="0" text-anchor="start" stroke="#fff" stroke-width="3.5" stroke-opacity=".85" paint-order="stroke" stroke-linejoin="round" textLength="135.5" lengthAdjust="spacing">BRUNSWICK</text><text x="839.4" y="132" font-family='"Liberation Sans", sans-serif' font-size="19" font-weight="700" fill="#4e4444" letter-spacing="0" text-anchor="start" stroke="#fff" stroke-width="3.5" stroke-opacity=".85" paint-order="stroke" stroke-linejoin="round" textLength="152.4" lengthAdjust="spacing">NOVA SCOTIA</text><text x="345" y="272.8" font-family='"Liberation Sans", sans-serif' font-size="19" font-weight="700" fill="#4e4444" letter-spacing="0" text-anchor="start" stroke="#fff" stroke-width="3.5" stroke-opacity=".85" paint-order="stroke" stroke-linejoin="round" textLength="46" lengthAdjust="spacing">NEW</text><text x="321" y="297.2" font-family='"Liberation Sans", sans-serif' font-size="19" font-weight="700" fill="#4e4444" letter-spacing="0" text-anchor="start" stroke="#fff" stroke-width="3.5" stroke-opacity=".85" paint-order="stroke" stroke-linejoin="round" textLength="104" lengthAdjust="spacing">HAMPSHIRE</text><text x="374" y="433.5" font-family='"Liberation Sans", sans-serif' font-size="19" font-weight="700" fill="#4e4444" letter-spacing="0" text-anchor="start" stroke="#fff" stroke-width="3.5" stroke-opacity=".85" paint-order="stroke" stroke-linejoin="round" textLength="80" lengthAdjust="spacing">ISLAND</text><circle cx="163.5" cy="148.1" r="12.35" fill="#61aa92" fill-opacity=".92" stroke="#508f78" stroke-opacity="1" stroke-width="2.3"/><circle cx="196.4" cy="155.9" r="12.35" fill="#61aa92" fill-opacity=".92" stroke="#508f78" stroke-opacity="1" stroke-width="2.3"/><circle cx="156.7" cy="172.0" r="12.35" fill="#61aa92" fill-opacity=".92" stroke="#508f78" stroke-opacity="1" stroke-width="2.3"/><circle cx="123.6" cy="171.7" r="12.35" fill="#61aa92" fill-opacity=".68" stroke="#508f78" stroke-opacity="0.6" stroke-width="2.3"/><circle cx="275.9" cy="147.7" r="12.35" fill="#61aa92" fill-opacity=".92" stroke="#508f78" stroke-opacity="1" stroke-width="2.3"/><circle cx="331.5" cy="152.3" r="12.35" fill="#61aa92" fill-opacity=".92" stroke="#508f78" stroke-opacity="1" stroke-width="2.3"/><circle cx="248.5" cy="170.6" r="12.35" fill="#61aa92" fill-opacity=".92" stroke="#508f78" stroke-opacity="1" stroke-width="2.3"/><circle cx="272.5" cy="190.3" r="12.35" fill="#61aa92" fill-opacity=".92" stroke="#508f78" stroke-opacity="1" stroke-width="2.3"/><circle cx="306.8" cy="184.6" r="12.35" fill="#61aa92" fill-opacity=".68" stroke="#508f78" stroke-opacity="0.6" stroke-width="2.3"/><circle cx="345.7" cy="181.4" r="12.35" fill="#61aa92" fill-opacity=".68" stroke="#508f78" stroke-opacity="0.6" stroke-width="2.3"/><circle cx="204.4" cy="198.1" r="12.35" fill="#61aa92" fill-opacity=".92" stroke="#508f78" stroke-opacity="1" stroke-width="2.3"/><circle cx="220.5" cy="209.2" r="12.35" fill="#61aa92" fill-opacity=".92" stroke="#508f78" stroke-opacity="1" stroke-width="2.3"/><circle cx="311.1" cy="215.0" r="12.35" fill="#61aa92" fill-opacity=".92" stroke="#508f78" stroke-opacity="1" stroke-width="2.3"/><circle cx="293.0" cy="220.5" r="12.35" fill="#61aa92" fill-opacity=".92" stroke="#508f78" stroke-opacity="1" stroke-width="2.3"/><circle cx="275.6" cy="226.8" r="12.35" fill="#61aa92" fill-opacity=".92" stroke="#508f78" stroke-opacity="1" stroke-width="2.3"/><circle cx="459.3" cy="84.7" r="12.35" fill="#61aa92" fill-opacity=".92" stroke="#508f78" stroke-opacity="1" stroke-width="2.3"/><circle cx="503.9" cy="100.3" r="12.35" fill="#61aa92" fill-opacity=".92" stroke="#508f78" stroke-opacity="1" stroke-width="2.3"/><circle cx="559.8" cy="83.2" r="12.35" fill="#61aa92" fill-opacity=".92" stroke="#508f78" stroke-opacity="1" stroke-width="2.3"/><circle cx="569.5" cy="109.8" r="12.35" fill="#61aa92" fill-opacity=".92" stroke="#508f78" stroke-opacity="1" stroke-width="2.3"/><circle cx="617.6" cy="39.4" r="12.35" fill="#61aa92" fill-opacity=".92" stroke="#508f78" stroke-opacity="1" stroke-width="2.3"/><circle cx="524.3" cy="126.0" r="12.35" fill="#61aa92" fill-opacity=".92" stroke="#508f78" stroke-opacity="1" stroke-width="2.3"/><circle cx="524.3" cy="141.3" r="12.35" fill="#61aa92" fill-opacity=".92" stroke="#508f78" stroke-opacity="1" stroke-width="2.3"/><circle cx="560.4" cy="146.8" r="12.35" fill="#61aa92" fill-opacity=".92" stroke="#508f78" stroke-opacity="1" stroke-width="2.3"/><circle cx="550.3" cy="160.2" r="12.35" fill="#61aa92" fill-opacity=".68" stroke="#508f78" stroke-opacity="0.6" stroke-width="2.3"/><circle cx="515.7" cy="163.8" r="12.35" fill="#61aa92" fill-opacity=".92" stroke="#508f78" stroke-opacity="1" stroke-width="2.3"/><circle cx="483.7" cy="168.1" r="12.35" fill="#61aa92" fill-opacity=".92" stroke="#508f78" stroke-opacity="1" stroke-width="2.3"/><circle cx="496.0" cy="184.6" r="12.35" fill="#61aa92" fill-opacity=".92" stroke="#508f78" stroke-opacity="1" stroke-width="2.3"/><circle cx="432.2" cy="143.3" r="12.35" fill="#61aa92" fill-opacity=".92" stroke="#508f78" stroke-opacity="1" stroke-width="2.3"/><circle cx="461.3" cy="134.4" r="12.35" fill="#61aa92" fill-opacity=".92" stroke="#508f78" stroke-opacity="1" stroke-width="2.3"/><circle cx="632.2" cy="124.4" r="12.35" fill="#61aa92" fill-opacity=".92" stroke="#508f78" stroke-opacity="1" stroke-width="2.3"/><circle cx="667.5" cy="150.7" r="12.35" fill="#61aa92" fill-opacity=".92" stroke="#508f78" stroke-opacity="1" stroke-width="2.3"/><circle cx="637.3" cy="169.6" r="12.35" fill="#61aa92" fill-opacity=".68" stroke="#508f78" stroke-opacity="0.6" stroke-width="2.3"/><circle cx="399.4" cy="181.1" r="12.35" fill="#61aa92" fill-opacity=".92" stroke="#508f78" stroke-opacity="1" stroke-width="2.3"/><circle cx="423.1" cy="194.5" r="12.35" fill="#61aa92" fill-opacity=".92" stroke="#508f78" stroke-opacity="1" stroke-width="2.3"/><circle cx="375.3" cy="200.0" r="12.35" fill="#61aa92" fill-opacity=".92" stroke="#508f78" stroke-opacity="1" stroke-width="2.3"/><circle cx="488.4" cy="204.8" r="12.35" fill="#61aa92" fill-opacity=".92" stroke="#508f78" stroke-opacity="1" stroke-width="2.3"/><circle cx="538.5" cy="196.1" r="12.35" fill="#61aa92" fill-opacity=".92" stroke="#508f78" stroke-opacity="1" stroke-width="2.3"/><circle cx="545.1" cy="206.3" r="12.35" fill="#61aa92" fill-opacity=".92" stroke="#508f78" stroke-opacity="1" stroke-width="2.3"/><circle cx="580.6" cy="192.2" r="12.35" fill="#61aa92" fill-opacity=".92" stroke="#508f78" stroke-opacity="1" stroke-width="2.3"/><circle cx="560.4" cy="217.4" r="12.35" fill="#61aa92" fill-opacity=".92" stroke="#508f78" stroke-opacity="1" stroke-width="2.3"/><circle cx="444.3" cy="218.9" r="12.35" fill="#61aa92" fill-opacity=".92" stroke="#508f78" stroke-opacity="1" stroke-width="2.3"/><circle cx="456.9" cy="224.0" r="12.35" fill="#61aa92" fill-opacity=".92" stroke="#508f78" stroke-opacity="1" stroke-width="2.3"/><circle cx="533.3" cy="224.0" r="12.35" fill="#61aa92" fill-opacity=".92" stroke="#508f78" stroke-opacity="1" stroke-width="2.3"/><circle cx="414.4" cy="226.8" r="12.35" fill="#61aa92" fill-opacity=".92" stroke="#508f78" stroke-opacity="1" stroke-width="2.3"/><circle cx="87.4" cy="233.5" r="12.35" fill="#61aa92" fill-opacity=".92" stroke="#508f78" stroke-opacity="1" stroke-width="2.3"/><circle cx="15.8" cy="301.2" r="12.35" fill="#61aa92" fill-opacity=".92" stroke="#508f78" stroke-opacity="1" stroke-width="2.3"/><circle cx="5.5" cy="329.5" r="12.35" fill="#61aa92" fill-opacity=".92" stroke="#508f78" stroke-opacity="1" stroke-width="2.3"/><circle cx="21.3" cy="353.2" r="12.35" fill="#61aa92" fill-opacity=".92" stroke="#508f78" stroke-opacity="1" stroke-width="2.3"/><circle cx="37.8" cy="332.7" r="12.35" fill="#61aa92" fill-opacity=".92" stroke="#508f78" stroke-opacity="1" stroke-width="2.3"/><circle cx="54.3" cy="313.8" r="12.35" fill="#61aa92" fill-opacity=".92" stroke="#508f78" stroke-opacity="1" stroke-width="2.3"/><circle cx="60.6" cy="329.5" r="12.35" fill="#61aa92" fill-opacity=".92" stroke="#508f78" stroke-opacity="1" stroke-width="2.3"/><circle cx="81.9" cy="310.6" r="12.35" fill="#61aa92" fill-opacity=".92" stroke="#508f78" stroke-opacity="1" stroke-width="2.3"/><circle cx="111.0" cy="309.1" r="12.35" fill="#61aa92" fill-opacity=".92" stroke="#508f78" stroke-opacity="1" stroke-width="2.3"/><circle cx="127.6" cy="301.2" r="12.35" fill="#61aa92" fill-opacity=".92" stroke="#508f78" stroke-opacity="1" stroke-width="2.3"/><circle cx="142.5" cy="319.8" r="12.35" fill="#61aa92" fill-opacity=".92" stroke="#508f78" stroke-opacity="1" stroke-width="2.3"/><circle cx="117.3" cy="335.0" r="12.35" fill="#61aa92" fill-opacity=".92" stroke="#508f78" stroke-opacity="1" stroke-width="2.3"/><circle cx="119.7" cy="359.5" r="12.35" fill="#61aa92" fill-opacity=".68" stroke="#508f78" stroke-opacity="0.6" stroke-width="2.3"/><circle cx="149.3" cy="363.1" r="12.35" fill="#61aa92" fill-opacity=".92" stroke="#508f78" stroke-opacity="1" stroke-width="2.3"/><circle cx="126.5" cy="382.8" r="12.35" fill="#61aa92" fill-opacity=".92" stroke="#508f78" stroke-opacity="1" stroke-width="2.3"/><circle cx="75.6" cy="357.1" r="12.35" fill="#61aa92" fill-opacity=".92" stroke="#508f78" stroke-opacity="1" stroke-width="2.3"/><circle cx="59.1" cy="366.5" r="12.35" fill="#61aa92" fill-opacity=".92" stroke="#508f78" stroke-opacity="1" stroke-width="2.3"/><circle cx="17.0" cy="393.3" r="12.35" fill="#61aa92" fill-opacity=".92" stroke="#508f78" stroke-opacity="1" stroke-width="2.3"/><circle cx="32.3" cy="394.9" r="12.35" fill="#61aa92" fill-opacity=".92" stroke="#508f78" stroke-opacity="1" stroke-width="2.3"/><circle cx="90.6" cy="390.2" r="12.35" fill="#61aa92" fill-opacity=".92" stroke="#508f78" stroke-opacity="1" stroke-width="2.3"/><circle cx="82.4" cy="402.3" r="12.35" fill="#61aa92" fill-opacity=".92" stroke="#508f78" stroke-opacity="1" stroke-width="2.3"/><circle cx="60.6" cy="431.1" r="12.35" fill="#61aa92" fill-opacity=".92" stroke="#508f78" stroke-opacity="1" stroke-width="2.3"/><circle cx="3.2" cy="432.7" r="12.35" fill="#61aa92" fill-opacity=".92" stroke="#508f78" stroke-opacity="1" stroke-width="2.3"/><circle cx="196.4" cy="321.2" r="12.35" fill="#61aa92" fill-opacity=".92" stroke="#508f78" stroke-opacity="1" stroke-width="2.3"/><circle cx="226.8" cy="316.9" r="12.35" fill="#61aa92" fill-opacity=".92" stroke="#508f78" stroke-opacity="1" stroke-width="2.3"/><circle cx="222.1" cy="334.3" r="12.35" fill="#61aa92" fill-opacity=".92" stroke="#508f78" stroke-opacity="1" stroke-width="2.3"/><circle cx="208.7" cy="342.1" r="12.35" fill="#61aa92" fill-opacity=".92" stroke="#508f78" stroke-opacity="1" stroke-width="2.3"/><circle cx="244.9" cy="348.4" r="12.35" fill="#61aa92" fill-opacity=".92" stroke="#508f78" stroke-opacity="1" stroke-width="2.3"/><circle cx="228.7" cy="360.2" r="12.35" fill="#61aa92" fill-opacity=".92" stroke="#508f78" stroke-opacity="1" stroke-width="2.3"/><circle cx="266.2" cy="331.1" r="12.35" fill="#61aa92" fill-opacity=".92" stroke="#508f78" stroke-opacity="1" stroke-width="2.3"/><circle cx="271.7" cy="348.4" r="12.35" fill="#61aa92" fill-opacity=".92" stroke="#508f78" stroke-opacity="1" stroke-width="2.3"/><circle cx="263.0" cy="372.1" r="12.35" fill="#61aa92" fill-opacity=".92" stroke="#508f78" stroke-opacity="1" stroke-width="2.3"/><circle cx="213.4" cy="377.6" r="12.35" fill="#61aa92" fill-opacity=".92" stroke="#508f78" stroke-opacity="1" stroke-width="2.3"/><circle cx="192.2" cy="385.0" r="12.35" fill="#61aa92" fill-opacity=".92" stroke="#508f78" stroke-opacity="1" stroke-width="2.3"/><circle cx="236.7" cy="383.9" r="12.35" fill="#61aa92" fill-opacity=".92" stroke="#508f78" stroke-opacity="1" stroke-width="2.3"/><circle cx="255.9" cy="393.3" r="12.35" fill="#61aa92" fill-opacity=".92" stroke="#508f78" stroke-opacity="1" stroke-width="2.3"/><circle cx="220.0" cy="409.9" r="12.35" fill="#61aa92" fill-opacity=".92" stroke="#508f78" stroke-opacity="1" stroke-width="2.3"/><circle cx="233.9" cy="244.8" r="12.35" fill="#61aa92" fill-opacity=".92" stroke="#508f78" stroke-opacity="1" stroke-width="2.3"/><circle cx="255.5" cy="243.7" r="12.35" fill="#61aa92" fill-opacity=".92" stroke="#508f78" stroke-opacity="1" stroke-width="2.3"/><circle cx="330.0" cy="242.9" r="12.35" fill="#61aa92" fill-opacity=".92" stroke="#508f78" stroke-opacity="1" stroke-width="2.3"/><circle cx="264.6" cy="266.8" r="12.35" fill="#61aa92" fill-opacity=".92" stroke="#508f78" stroke-opacity="1" stroke-width="2.3"/><circle cx="285.4" cy="274.4" r="12.35" fill="#61aa92" fill-opacity=".68" stroke="#508f78" stroke-opacity="0.6" stroke-width="2.3"/><circle cx="265.9" cy="284.6" r="12.35" fill="#61aa92" fill-opacity=".92" stroke="#508f78" stroke-opacity="1" stroke-width="2.3"/><circle cx="242.6" cy="290.9" r="12.35" fill="#61aa92" fill-opacity=".92" stroke="#508f78" stroke-opacity="1" stroke-width="2.3"/><circle cx="326.5" cy="267.3" r="12.35" fill="#61aa92" fill-opacity=".92" stroke="#508f78" stroke-opacity="1" stroke-width="2.3"/><circle cx="312.6" cy="291.4" r="12.35" fill="#61aa92" fill-opacity=".92" stroke="#508f78" stroke-opacity="1" stroke-width="2.3"/><circle cx="334.7" cy="287.8" r="12.35" fill="#61aa92" fill-opacity=".92" stroke="#508f78" stroke-opacity="1" stroke-width="2.3"/><circle cx="360.7" cy="252.4" r="12.35" fill="#61aa92" fill-opacity=".92" stroke="#508f78" stroke-opacity="1" stroke-width="2.3"/><circle cx="328.4" cy="330.3" r="12.35" fill="#61aa92" fill-opacity=".92" stroke="#508f78" stroke-opacity="1" stroke-width="2.3"/><circle cx="346.5" cy="338.2" r="12.35" fill="#61aa92" fill-opacity=".92" stroke="#508f78" stroke-opacity="1" stroke-width="2.3"/><circle cx="312.6" cy="357.1" r="12.35" fill="#61aa92" fill-opacity=".92" stroke="#508f78" stroke-opacity="1" stroke-width="2.3"/><circle cx="327.6" cy="359.5" r="12.35" fill="#61aa92" fill-opacity=".92" stroke="#508f78" stroke-opacity="1" stroke-width="2.3"/><circle cx="344.9" cy="361.0" r="12.35" fill="#61aa92" fill-opacity=".92" stroke="#508f78" stroke-opacity="1" stroke-width="2.3"/><circle cx="362.3" cy="359.5" r="12.35" fill="#61aa92" fill-opacity=".92" stroke="#508f78" stroke-opacity="1" stroke-width="2.3"/><circle cx="306.8" cy="380.7" r="12.35" fill="#61aa92" fill-opacity=".92" stroke="#508f78" stroke-opacity="1" stroke-width="2.3"/><circle cx="326.0" cy="389.4" r="12.35" fill="#61aa92" fill-opacity=".92" stroke="#508f78" stroke-opacity="1" stroke-width="2.3"/><circle cx="300.0" cy="394.9" r="12.35" fill="#61aa92" fill-opacity=".92" stroke="#508f78" stroke-opacity="1" stroke-width="2.3"/><circle cx="354.4" cy="386.2" r="12.35" fill="#61aa92" fill-opacity=".92" stroke="#508f78" stroke-opacity="1" stroke-width="2.3"/><circle cx="344.9" cy="400.4" r="12.35" fill="#61aa92" fill-opacity=".92" stroke="#508f78" stroke-opacity="1" stroke-width="2.3"/><circle cx="294.5" cy="414.6" r="12.35" fill="#61aa92" fill-opacity=".92" stroke="#508f78" stroke-opacity="1" stroke-width="2.3"/><circle cx="280.4" cy="428.0" r="12.35" fill="#61aa92" fill-opacity=".92" stroke="#508f78" stroke-opacity="1" stroke-width="2.3"/><circle cx="304.8" cy="431.1" r="12.35" fill="#61aa92" fill-opacity=".92" stroke="#508f78" stroke-opacity="1" stroke-width="2.3"/><circle cx="333.9" cy="430.3" r="12.35" fill="#61aa92" fill-opacity=".92" stroke="#508f78" stroke-opacity="1" stroke-width="2.3"/><circle cx="352.8" cy="424.0" r="12.35" fill="#61aa92" fill-opacity=".92" stroke="#508f78" stroke-opacity="1" stroke-width="2.3"/><circle cx="166.2" cy="433.5" r="12.35" fill="#61aa92" fill-opacity=".92" stroke="#508f78" stroke-opacity="1" stroke-width="2.3"/><circle cx="172.5" cy="442.9" r="12.35" fill="#61aa92" fill-opacity=".92" stroke="#508f78" stroke-opacity="1" stroke-width="2.3"/><circle cx="192.9" cy="431.9" r="12.35" fill="#61aa92" fill-opacity=".92" stroke="#508f78" stroke-opacity="1" stroke-width="2.3"/><circle cx="189.0" cy="442.9" r="12.35" fill="#61aa92" fill-opacity=".92" stroke="#508f78" stroke-opacity="1" stroke-width="2.3"/><circle cx="209.5" cy="439.8" r="12.35" fill="#61aa92" fill-opacity=".92" stroke="#508f78" stroke-opacity="1" stroke-width="2.3"/><circle cx="225.2" cy="442.9" r="12.35" fill="#61aa92" fill-opacity=".92" stroke="#508f78" stroke-opacity="1" stroke-width="2.3"/><circle cx="234.7" cy="433.5" r="12.35" fill="#61aa92" fill-opacity=".92" stroke="#508f78" stroke-opacity="1" stroke-width="2.3"/><circle cx="236.3" cy="444.5" r="12.35" fill="#61aa92" fill-opacity=".92" stroke="#508f78" stroke-opacity="1" stroke-width="2.3"/><circle cx="137.0" cy="448.0" r="12.35" fill="#61aa92" fill-opacity=".68" stroke="#508f78" stroke-opacity="0.6" stroke-width="2.3"/><circle cx="272.5" cy="448.0" r="12.35" fill="#61aa92" fill-opacity=".92" stroke="#508f78" stroke-opacity="1" stroke-width="2.3"/><circle cx="291.4" cy="448.0" r="12.35" fill="#61aa92" fill-opacity=".92" stroke="#508f78" stroke-opacity="1" stroke-width="2.3"/><circle cx="493.5" cy="236.6" r="12.35" fill="#61aa92" fill-opacity=".92" stroke="#508f78" stroke-opacity="1" stroke-width="2.3"/><circle cx="383.7" cy="270.8" r="12.35" fill="#61aa92" fill-opacity=".92" stroke="#508f78" stroke-opacity="1" stroke-width="2.3"/><circle cx="455.4" cy="264.2" r="12.35" fill="#61aa92" fill-opacity=".92" stroke="#508f78" stroke-opacity="1" stroke-width="2.3"/><circle cx="445.1" cy="280.7" r="12.35" fill="#61aa92" fill-opacity=".92" stroke="#508f78" stroke-opacity="1" stroke-width="2.3"/><circle cx="429.4" cy="286.7" r="12.35" fill="#61aa92" fill-opacity=".92" stroke="#508f78" stroke-opacity="1" stroke-width="2.3"/><circle cx="414.4" cy="296.5" r="12.35" fill="#61aa92" fill-opacity=".92" stroke="#508f78" stroke-opacity="1" stroke-width="2.3"/><circle cx="378.5" cy="303.5" r="12.35" fill="#61aa92" fill-opacity=".92" stroke="#508f78" stroke-opacity="1" stroke-width="2.3"/><circle cx="422.3" cy="314.6" r="12.35" fill="#61aa92" fill-opacity=".92" stroke="#508f78" stroke-opacity="1" stroke-width="2.3"/><circle cx="382.6" cy="327.2" r="12.35" fill="#61aa92" fill-opacity=".92" stroke="#508f78" stroke-opacity="1" stroke-width="2.3"/><circle cx="377.4" cy="340.6" r="12.35" fill="#61aa92" fill-opacity=".92" stroke="#508f78" stroke-opacity="1" stroke-width="2.3"/><circle cx="403.1" cy="346.1" r="12.35" fill="#61aa92" fill-opacity=".92" stroke="#508f78" stroke-opacity="1" stroke-width="2.3"/><circle cx="416.8" cy="357.9" r="12.35" fill="#61aa92" fill-opacity=".92" stroke="#508f78" stroke-opacity="1" stroke-width="2.3"/><circle cx="377.4" cy="368.9" r="12.35" fill="#61aa92" fill-opacity=".92" stroke="#508f78" stroke-opacity="1" stroke-width="2.3"/><circle cx="395.5" cy="369.7" r="12.35" fill="#61aa92" fill-opacity=".92" stroke="#508f78" stroke-opacity="1" stroke-width="2.3"/><circle cx="410.5" cy="376.0" r="12.35" fill="#61aa92" fill-opacity=".68" stroke="#508f78" stroke-opacity="0.6" stroke-width="2.3"/><circle cx="399.4" cy="391.7" r="12.35" fill="#61aa92" fill-opacity=".92" stroke="#508f78" stroke-opacity="1" stroke-width="2.3"/><circle cx="386.1" cy="398.8" r="12.35" fill="#61aa92" fill-opacity=".92" stroke="#508f78" stroke-opacity="1" stroke-width="2.3"/><circle cx="431.7" cy="399.6" r="12.35" fill="#61aa92" fill-opacity=".92" stroke="#508f78" stroke-opacity="1" stroke-width="2.3"/><circle cx="460.9" cy="402.0" r="12.35" fill="#61aa92" fill-opacity=".92" stroke="#508f78" stroke-opacity="1" stroke-width="2.3"/><circle cx="379.0" cy="416.2" r="12.35" fill="#61aa92" fill-opacity=".92" stroke="#508f78" stroke-opacity="1" stroke-width="2.3"/><circle cx="409.7" cy="420.1" r="12.35" fill="#61aa92" fill-opacity=".92" stroke="#508f78" stroke-opacity="1" stroke-width="2.3"/><circle cx="428.6" cy="419.3" r="12.35" fill="#61aa92" fill-opacity=".92" stroke="#508f78" stroke-opacity="1" stroke-width="2.3"/><circle cx="382.9" cy="433.5" r="12.35" fill="#61aa92" fill-opacity=".92" stroke="#508f78" stroke-opacity="1" stroke-width="2.3"/><circle cx="384.5" cy="444.5" r="12.35" fill="#61aa92" fill-opacity=".92" stroke="#508f78" stroke-opacity="1" stroke-width="2.3"/><circle cx="456.9" cy="436.6" r="12.35" fill="#61aa92" fill-opacity=".92" stroke="#508f78" stroke-opacity="1" stroke-width="2.3"/><circle cx="475.8" cy="435.1" r="12.35" fill="#61aa92" fill-opacity=".92" stroke="#508f78" stroke-opacity="1" stroke-width="2.3"/><circle cx="395.5" cy="448.0" r="12.35" fill="#61aa92" fill-opacity=".92" stroke="#508f78" stroke-opacity="1" stroke-width="2.3"/></svg>
<div class="a" style="left:1543px;top:939px;width:64px;height:128px;background:#fff;border-radius:8px;box-shadow:0 1.8px 8px -2px rgba(0,0,0,.1),0 5px 16px -2px rgba(0,0,0,.08),0 11px 24px -2px rgba(0,0,0,.06),0 30px 30px -2px rgba(0,0,0,.05);"></div>
<div class="a" style="left:1543px;top:1083px;width:64px;height:64px;background:#fff;border-radius:8px;box-shadow:0 1.8px 8px -2px rgba(0,0,0,.1),0 5px 16px -2px rgba(0,0,0,.08),0 11px 24px -2px rgba(0,0,0,.06),0 30px 30px -2px rgba(0,0,0,.05);"></div>
<div class="a" style="left:1543px;top:1163px;width:64px;height:64px;background:#2f75c5;border-radius:8px;box-shadow:0 1.8px 8px -2px rgba(0,0,0,.1),0 5px 16px -2px rgba(0,0,0,.08),0 11px 24px -2px rgba(0,0,0,.06),0 30px 30px -2px rgba(0,0,0,.05);"></div>
<div class="a" style="left:2523.5px;top:938px;width:63px;height:62.5px;background:#fff;"></div>
<svg class="a" style="left:1543px;top:939px;" width="64" height="128" viewBox="0 0 64 128"><circle cx="32" cy="32" r="15" fill="#343741"/><path d="M22.8 32h18.400M32 22.800v18.400" stroke="#fff" stroke-width="2.200"/>
<circle cx="32" cy="95.700" r="15" fill="#343741"/><path d="M22.800 95.700h18.400" stroke="#fff" stroke-width="2.200"/></svg>
<svg class="a" style="left:1543px;top:1083px;" width="64" height="64" viewBox="0 0 64 64"><g fill="none" stroke="#343741" stroke-width="2.200"><circle cx="32" cy="32" r="12" stroke-dasharray="14.850 4" stroke-dashoffset="-2"/>
<path d="M32 17v10M32 37v10M17 32h10M37 32h10"/></g><circle cx="32" cy="32" r="2.300" fill="#343741"/></svg>
<svg class="a" style="left:1543px;top:1163px;" width="64" height="64" viewBox="0 0 64 64"><g fill="none" stroke="#fff" stroke-width="2.100"><path d="M20 44l24-24M36.200 19.900h8v8M27.800 44.200h-8v-8"/></g></svg>
<svg class="a" style="left:2523px;top:938px;" width="64" height="62" viewBox="0 0 64 62"><g fill="none" stroke="#1a1c21" stroke-width="2"><path d="M24 22h20M16 30h28M24 38h20M22.500 23.500L16 30l6.500 6.500"/></g></svg>
<svg class="a" style="left:2045px;top:1312px;" width="22" height="22" viewBox="0 0 22 22"><g fill="none" stroke="#343741" stroke-width="1.800"><path d="M9 3.500H4.500a2 2 0 00-2 2v12a2 2 0 002 2h12a2 2 0 002-2V13"/><path d="M12.500 2.500h7v7M19.500 2.500l-9.500 9.500"/></g></svg>
<svg class="a" style="left:2232px;top:1312px;" width="22" height="22" viewBox="0 0 22 22"><g fill="none" stroke="#343741" stroke-width="1.800"><path d="M9 3.500H4.500a2 2 0 00-2 2v12a2 2 0 002 2h12a2 2 0 002-2V13"/><path d="M12.500 2.500h7v7M19.500 2.500l-9.500 9.500"/></g></svg>
<svg class="a" style="left:2564px;top:1312px;" width="22" height="22" viewBox="0 0 22 22"><g fill="none" stroke="#343741" stroke-width="1.800"><path d="M9 3.500H4.500a2 2 0 00-2 2v12a2 2 0 002 2h12a2 2 0 002-2V13"/><path d="M12.500 2.500h7v7M19.500 2.500l-9.500 9.500"/></g></svg>
<span class="t" style="top:29.30px;font-size:56px;line-height:56px;color:#1a1c21;font-weight:700;left:28px;letter-spacing:-0.732px;">kibana_sample_data_logs</span>
<span class="t" style="top:43.30px;font-size:28.8px;line-height:28.8px;color:#005a9e;font-weight:400;left:1785px;letter-spacing:0.577px;-webkit-text-stroke:0.7px #005a9e;">Use full data</span>
<span class="t" style="top:43.30px;font-size:28.8px;line-height:28.8px;color:#343741;font-weight:400;left:2204px;letter-spacing:0.357px;-webkit-text-stroke:0.4px #343741;">Feb 20, 2022 @ 00:39:02.91</span>
<span class="t" style="top:43.30px;font-size:28.8px;line-height:28.8px;color:#343741;font-weight:400;left:2641px;letter-spacing:0.549px;-webkit-text-stroke:0.4px #343741;">Apr 20, 2022 @ 00:39:02.91</span>
<span class="t" style="top:170.30px;font-size:28.8px;line-height:28.8px;color:#343741;font-weight:400;left:62px;letter-spacing:0.706px;-webkit-text-stroke:0.4px #343741;">Total documents: </span>
<span class="t" style="top:170.30px;font-size:28.8px;line-height:28.8px;color:#343741;font-weight:700;left:297px;letter-spacing:1.384px;">14,074</span>
<span class="t" style="top:387.30px;font-size:20.5px;line-height:20.5px;color:#69707d;font-weight:400;right:2520.00px;letter-spacing:0.6px;">0</span>
<span class="t" style="top:359.30px;font-size:20.5px;line-height:20.5px;color:#69707d;font-weight:400;right:2520.00px;letter-spacing:0.6px;">50</span>
<span class="t" style="top:332.30px;font-size:20.5px;line-height:20.5px;color:#69707d;font-weight:400;right:2520.00px;letter-spacing:0.6px;">100</span>
<span class="t" style="top:304.30px;font-size:20.5px;line-height:20.5px;color:#69707d;font-weight:400;right:2520.00px;letter-spacing:0.6px;">150</span>
<span class="t" style="top:277.30px;font-size:20.5px;line-height:20.5px;color:#69707d;font-weight:400;right:2520.00px;letter-spacing:0.6px;">200</span>
<span class="t" style="top:249.30px;font-size:20.5px;line-height:20.5px;color:#69707d;font-weight:400;right:2520.00px;letter-spacing:0.6px;">250</span>
<span class="t" style="top:221.30px;font-size:20.5px;line-height:20.5px;color:#69707d;font-weight:400;right:2520.00px;letter-spacing:0.6px;">300</span>
<span class="t" style="top:403.30px;font-size:20.5px;line-height:20.5px;color:#69707d;font-weight:400;left:264.9px;letter-spacing:0.8px;">21th</span>
<span class="t" style="top:403.30px;font-size:20.5px;line-height:20.5px;color:#69707d;font-weight:400;left:525.265px;letter-spacing:0.8px;">28th</span>
<span class="t" style="top:403.30px;font-size:20.5px;line-height:20.5px;color:#69707d;font-weight:400;left:785.63px;letter-spacing:0.8px;">7th</span>
<span class="t" style="top:403.30px;font-size:20.5px;line-height:20.5px;color:#69707d;font-weight:400;left:1045.995px;letter-spacing:0.8px;">14th</span>
<span class="t" style="top:403.30px;font-size:20.5px;line-height:20.5px;color:#69707d;font-weight:400;left:1306.3600000000001px;letter-spacing:0.8px;">21th</span>
<span class="t" style="top:403.30px;font-size:20.5px;line-height:20.5px;color:#69707d;font-weight:400;left:1566.725px;letter-spacing:0.8px;">28th</span>
<span class="t" style="top:403.30px;font-size:20.5px;line-height:20.5px;color:#69707d;font-weight:400;left:1827.0900000000001px;letter-spacing:0.8px;">4th</span>
<span class="t" style="top:403.30px;font-size:20.5px;line-height:20.5px;color:#69707d;font-weight:400;left:2087.455px;letter-spacing:0.8px;">11th</span>
<span class="t" style="top:403.30px;font-size:20.5px;line-height:20.5px;color:#69707d;font-weight:400;left:2347.82px;letter-spacing:0.8px;">18th</span>
<span class="t" style="top:423.30px;font-size:20.5px;line-height:20.5px;color:#69707d;font-weight:400;left:228px;letter-spacing:0.555px;">February 2022</span>
<span class="t" style="top:423.30px;font-size:20.5px;line-height:20.5px;color:#69707d;font-weight:400;left:562.46px;letter-spacing:0.415px;">March 2022</span>
<span class="t" style="top:423.30px;font-size:20.5px;line-height:20.5px;color:#69707d;font-weight:400;left:1715.505px;letter-spacing:0.632px;">April 2022</span>
<span class="t" style="top:486.30px;font-size:28.8px;line-height:28.8px;color:#69707d;font-weight:400;left:80px;letter-spacing:0.337px;-webkit-text-stroke:0.4px #69707d;">Search... (e.g. status:200 AND extension:"PHP")</span>
<span class="t" style="top:489.30px;font-size:24.7px;line-height:24.7px;color:#006bb8;font-weight:400;left:1251px;letter-spacing:-0.703px;-webkit-text-stroke:0.6px #006bb8;">KQL</span>
<span class="t" style="top:486.30px;font-size:28.8px;line-height:28.8px;color:#343741;font-weight:400;left:1387px;letter-spacing:0.326px;-webkit-text-stroke:0.4px #343741;">Search all</span>
<span class="t" style="top:494.30px;font-size:19px;line-height:19px;color:#343741;font-weight:700;left:2010px;">?</span>
<span class="t" style="top:487.30px;font-size:28.8px;line-height:28.8px;color:#343741;font-weight:400;left:2065px;letter-spacing:0.394px;-webkit-text-stroke:0.4px #343741;">Field name</span>
<span class="t" style="top:488.30px;font-size:25.8px;line-height:25.8px;color:#000;font-weight:400;left:2237px;letter-spacing:2.297px;-webkit-text-stroke:0.6px #000;">36</span>
<span class="t" style="top:487.30px;font-size:28.8px;line-height:28.8px;color:#343741;font-weight:700;left:2372px;letter-spacing:0.175px;">Field type</span>
<span class="t" style="top:488.30px;font-size:25px;line-height:25px;color:#fff;font-weight:400;left:2540px;-webkit-text-stroke:0.6px #fff;">1</span>
<span class="t" style="top:570.30px;font-size:28.8px;line-height:28.8px;color:#0071c2;font-weight:400;left:152px;letter-spacing:1.102px;-webkit-text-stroke:0.8px #0071c2;">+ Add filter</span>
<span class="t" style="top:675.30px;font-size:28.8px;line-height:28.8px;color:#343741;font-weight:700;left:70px;letter-spacing:0.109px;">All fields</span>
<span class="t" style="top:677.30px;font-size:27px;line-height:27px;color:#000;font-weight:700;left:214.5px;letter-spacing:1.953px;">36</span>
<span class="t" style="top:675.30px;font-size:28.8px;line-height:28.8px;color:#69707d;font-weight:400;left:270px;letter-spacing:1.152px;-webkit-text-stroke:0.4px #69707d;">of 38 total</span>
<span class="t" style="top:675.30px;font-size:28.8px;line-height:28.8px;color:#343741;font-weight:700;left:654px;letter-spacing:0.081px;">Number fields</span>
<span class="t" style="top:677.30px;font-size:27px;line-height:27px;color:#000;font-weight:700;left:879.5px;">5</span>
<span class="t" style="top:675.30px;font-size:28.8px;line-height:28.8px;color:#69707d;font-weight:400;left:926px;letter-spacing:1.059px;-webkit-text-stroke:0.4px #69707d;">of 5 total</span>
<span class="t" style="top:675.30px;font-size:28.8px;line-height:28.8px;color:#343741;font-weight:400;left:1346px;letter-spacing:0.707px;-webkit-text-stroke:0.4px #343741;">Show empty fields</span>
<span class="t" style="top:772.30px;font-size:24.7px;line-height:24.7px;color:#1a1c21;font-weight:700;left:189px;letter-spacing:0.734px;">Type</span>
<span class="t" style="top:772.30px;font-size:24.7px;line-height:24.7px;color:#1a1c21;font-weight:700;left:300px;letter-spacing:0.250px;">Name</span>
<span class="t" style="top:772.30px;font-size:24.7px;line-height:24.7px;color:#1a1c21;font-weight:700;left:1168px;letter-spacing:-0.141px;">Documents (%)</span>
<span class="t" style="top:772.30px;font-size:24.7px;line-height:24.7px;color:#1a1c21;font-weight:700;left:1618px;letter-spacing:-0.161px;">Distinct values</span>
<span class="t" style="top:772.30px;font-size:24.7px;line-height:24.7px;color:#1a1c21;font-weight:700;left:2100px;letter-spacing:-0.188px;">Distributions</span>
<span class="t" style="top:772.30px;font-size:24.7px;line-height:24.7px;color:#1a1c21;font-weight:700;left:2554px;letter-spacing:-0.255px;">Actions</span>
<span class="t" style="top:846.30px;font-size:24.7px;line-height:24.7px;color:#343741;font-weight:400;left:300.5px;letter-spacing:0.665px;-webkit-text-stroke:0.4px #343741;">geo.coordinates</span>
<span class="t" style="top:846.30px;font-size:24.7px;line-height:24.7px;color:#343741;font-weight:400;left:1202.5px;letter-spacing:1.082px;-webkit-text-stroke:0.4px #343741;">14074 (100%)</span>
<span class="t" style="top:846.30px;font-size:24.7px;line-height:24.7px;color:#343741;font-weight:400;left:1651.5px;letter-spacing:2.359px;-webkit-text-stroke:0.4px #343741;">3303</span>
<span class="t" style="top:921.30px;font-size:24.7px;line-height:24.7px;color:#69707d;font-weight:700;left:316px;letter-spacing:-0.087px;">DOCUMENTS STATS</span>
<span class="t" style="top:921.30px;font-size:24.7px;line-height:24.7px;color:#69707d;font-weight:700;left:1027px;letter-spacing:-0.545px;">EXAMPLES</span>
<span class="t" style="top:977.30px;font-size:24.7px;line-height:24.7px;color:#343741;font-weight:400;left:214px;letter-spacing:1.273px;-webkit-text-stroke:0.4px #343741;">count</span>
<span class="t" style="top:977.30px;font-size:24.7px;line-height:24.7px;color:#343741;font-weight:700;right:2044.04px;letter-spacing:2.961px;">14074</span>
<span class="t" style="top:1027.30px;font-size:24.7px;line-height:24.7px;color:#343741;font-weight:400;left:214px;letter-spacing:0.828px;-webkit-text-stroke:0.4px #343741;">percentage</span>
<span class="t" style="top:1027.30px;font-size:24.7px;line-height:24.7px;color:#343741;font-weight:700;right:2045.22px;letter-spacing:1.781px;">100%</span>
<span class="t" style="top:1077.30px;font-size:24.7px;line-height:24.7px;color:#343741;font-weight:400;left:214px;letter-spacing:0.638px;-webkit-text-stroke:0.4px #343741;">distinct values</span>
<span class="t" style="top:1077.30px;font-size:24.7px;line-height:24.7px;color:#343741;font-weight:700;right:2043.47px;letter-spacing:3.526px;">3303</span>
<span class="t" style="top:978.30px;font-size:25.8px;line-height:25.8px;color:#343741;font-weight:400;left:739.5px;letter-spacing:0.759px;-webkit-text-stroke:0.4px #343741;">{"coordinates":[-86.25613889,42.35083333],"type":"Point"}</span>
<span class="t" style="top:1026.30px;font-size:25.8px;line-height:25.8px;color:#343741;font-weight:400;left:739.5px;letter-spacing:0.759px;-webkit-text-stroke:0.4px #343741;">{"coordinates":[-86.01213889,31.86041667],"type":"Point"}</span>
<span class="t" style="top:1074.30px;font-size:25.8px;line-height:25.8px;color:#343741;font-weight:400;left:739.5px;letter-spacing:0.759px;-webkit-text-stroke:0.4px #343741;">{"coordinates":[-102.3990931,35.23199833],"type":"Point"}</span>
<span class="t" style="top:1122.30px;font-size:25.8px;line-height:25.8px;color:#343741;font-weight:400;left:739.5px;letter-spacing:0.759px;-webkit-text-stroke:0.4px #343741;">{"coordinates":[-121.4102706,36.89334528],"type":"Point"}</span>
<span class="t" style="top:1170.30px;font-size:25.8px;line-height:25.8px;color:#343741;font-weight:400;left:739.5px;letter-spacing:0.759px;-webkit-text-stroke:0.4px #343741;">{"coordinates":[-90.02825694,30.04242056],"type":"Point"}</span>
<span class="t" style="top:1218.30px;font-size:25.8px;line-height:25.8px;color:#343741;font-weight:400;left:739.5px;letter-spacing:0.759px;-webkit-text-stroke:0.4px #343741;">{"coordinates":[-76.12777778,43.18166667],"type":"Point"}</span>
<span class="t" style="top:1266.30px;font-size:25.8px;line-height:25.8px;color:#343741;font-weight:400;left:739.5px;letter-spacing:0.759px;-webkit-text-stroke:0.4px #343741;">{"coordinates":[-75.76974472,39.83052639],"type":"Point"}</span>
<span class="t" style="top:1314.30px;font-size:25.8px;line-height:25.8px;color:#343741;font-weight:400;left:739.5px;letter-spacing:0.759px;-webkit-text-stroke:0.4px #343741;">{"coordinates":[-121.2006389,44.09483333],"type":"Point"}</span>
<span class="t" style="top:1362.30px;font-size:25.8px;line-height:25.8px;color:#343741;font-weight:400;left:739.5px;letter-spacing:0.759px;-webkit-text-stroke:0.4px #343741;">{"coordinates":[-99.34038139,41.63695083],"type":"Point"}</span>
<span class="t" style="top:1410.30px;font-size:25.8px;line-height:25.8px;color:#343741;font-weight:400;left:739.5px;letter-spacing:0.759px;-webkit-text-stroke:0.4px #343741;">{"coordinates":[-94.73133333,37.44855556],"type":"Point"}</span>
<span class="t" style="top:1259.30px;font-size:21px;line-height:21px;color:#343741;font-weight:700;left:2485px;letter-spacing:0.293px;">zoom:</span>
<span class="t" style="top:1259.30px;font-size:21px;line-height:21px;color:#343741;font-weight:400;left:2554px;letter-spacing:1.398px;-webkit-text-stroke:0.3px #343741;">4.5</span>
<span class="t" style="top:1310.30px;font-size:21px;line-height:21px;color:#343741;font-weight:400;left:1827.5px;letter-spacing:0.689px;-webkit-text-stroke:0.7px #343741;">Elastic Maps Service</span>
<span class="t" style="top:1310.30px;font-size:21px;line-height:21px;color:#343741;font-weight:400;left:2068.5px;-webkit-text-stroke:0.7px #343741;">,</span>
<span class="t" style="top:1310.30px;font-size:21px;line-height:21px;color:#343741;font-weight:400;left:2079px;letter-spacing:0.746px;-webkit-text-stroke:0.7px #343741;">OpenMapTiles</span>
<span class="t" style="top:1310.30px;font-size:21px;line-height:21px;color:#343741;font-weight:400;left:2255px;-webkit-text-stroke:0.7px #343741;">,</span>
<span class="t" style="top:1310.30px;font-size:21px;line-height:21px;color:#343741;font-weight:400;left:2266.5px;letter-spacing:0.988px;-webkit-text-stroke:0.7px #343741;">OpenStreetMap contributors</span>
</div></body></html>
